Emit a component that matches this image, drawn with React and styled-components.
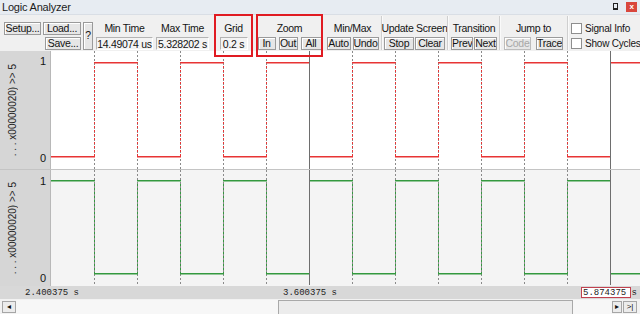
import React from 'react';
import styled, { createGlobalStyle } from 'styled-components';

const GlobalStyle = createGlobalStyle`
  html, body {
    margin: 0;
    padding: 0;
    background: #f0f0f0;
  }
  body {
    font-family: "Liberation Sans", Arial, sans-serif;
  }
`;

const Window = styled.div`
  position: relative;
  width: 640px;
  height: 314px;
  display: flex;
  flex-direction: column;
  background: #f0f0f0;
  overflow: hidden;
  font-size: 11px;
  color: #141414;
`;

const TitleBar = styled.div`
  height: 14px;
  display: flex;
  align-items: center;
  padding: 0 3px 0 2px;
  background: #e7ecf2;
  font-size: 11px;
  color: #1c1c1c;
  letter-spacing: -0.2px;
`;

const TitleText = styled.span`
  flex: 1;
`;

const Pin = styled.span`
  width: 5px;
  height: 7px;
  margin-right: 8px;
  border: 1px solid #222;
  border-bottom-width: 2px;
  box-sizing: border-box;
`;

const CloseBtn = styled.span`
  width: 11px;
  height: 10px;
  background: #d9473d;
  color: #fff;
  font-size: 8px;
  line-height: 10px;
  text-align: center;
  font-weight: bold;
`;

const Toolbar = styled.div`
  height: 38px;
  box-sizing: border-box;
  border-top: 1px solid #d9dee5;
  display: flex;
  align-items: flex-start;
  padding-top: 7px;
  font-size: 10.5px;
  letter-spacing: -0.3px;
`;

const FileGrid = styled.div`
  display: grid;
  grid-template-columns: 37px 38px 10px;
  grid-template-rows: 13px 13px;
  column-gap: 2px;
  row-gap: 2px;
  margin-left: 4px;
  flex: none;
`;

const Group = styled.div`
  width: ${p => p.$w}px;
  margin-left: ${p => p.$ml}px;
  flex: none;
  display: flex;
  flex-direction: column;
  align-items: center;
  gap: 2px;
`;

const Label = styled.div`
  height: 13px;
  line-height: 13px;
  white-space: nowrap;
`;

const Row = styled.div`
  display: flex;
  gap: ${p => p.$gap}px;
  height: 13px;
`;

const Btn = styled.button`
  width: ${p => p.$w}px;
  height: ${p => p.$h || 13}px;
  padding: 0;
  margin: 0;
  justify-self: end;
  grid-column: ${p => p.$col || 'auto'};
  grid-row: ${p => p.$row || 'auto'};
  font: inherit;
  line-height: 11px;
  letter-spacing: -0.3px;
  color: ${p => (p.disabled ? '#a8a8a8' : '#141414')};
  background: #e6e6e6;
  border: 1px solid ${p => (p.disabled ? '#bcbcbc' : '#9a9a9a')};
  box-shadow: inset 1px 1px 0 #fff;
  box-sizing: border-box;
  white-space: nowrap;
  overflow: hidden;
`;

const ValueBox = styled.div`
  width: ${p => p.$w}px;
  height: 13px;
  line-height: 12px;
  box-sizing: border-box;
  border: 1px solid #b4b4b4;
  border-right-color: #fff;
  border-bottom-color: #fff;
  background: #f3f3f3;
  text-align: center;
  white-space: nowrap;
`;

const Sep = styled.div`
  width: 1px;
  height: 34px;
  margin-top: -6px;
  margin-left: ${p => p.$ml}px;
  flex: none;
  background: #cfcfcf;
  box-shadow: 1px 0 0 #fafafa;
`;

const CheckCol = styled.div`
  margin-left: 3px;
  display: flex;
  flex-direction: column;
  gap: 2px;
`;

const Check = styled.div`
  display: flex;
  align-items: center;
  gap: 3px;
  height: 13px;
  font-size: 10px;
  letter-spacing: -0.2px;
  white-space: nowrap;
`;

const CheckBox = styled.span`
  width: 11px;
  height: 11px;
  box-sizing: border-box;
  border: 1px solid #8e8e8e;
  background: #fff;
`;

const Tracks = styled.div`
  display: flex;
  flex-direction: column;
`;

const Track = styled.div`
  display: flex;
  height: ${p => p.$h}px;
  background: ${p => p.$bg};
  border-top: ${p => (p.$sep ? '1px solid #c4c4c4' : 'none')};
`;

const SidePanel = styled.div`
  width: 51px;
  flex: none;
  display: flex;
  background: #d6d6d6;
  border-right: 1px solid #b8b8b8;
  box-sizing: border-box;
`;

const NameCol = styled.div`
  width: 24px;
  display: flex;
  align-items: center;
  justify-content: center;
`;

const SignalName = styled.span`
  writing-mode: vertical-rl;
  transform: rotate(180deg);
  font-size: 10px;
  white-space: nowrap;
  color: #222;
`;

const ValueCol = styled.div`
  flex: 1;
  display: flex;
  flex-direction: column;
  justify-content: space-between;
  align-items: flex-end;
  padding: ${p => p.$pt}px 4px ${p => p.$pb}px 0;
  font-size: 11px;
  line-height: 12px;
`;

const TimeAxis = styled.div`
  height: 13px;
  display: flex;
  align-items: center;
  background: #d8d8d8;
  font-family: "Liberation Mono", "Courier New", monospace;
  font-size: 9px;
  color: #222;
`;

const TimeMark = styled.span`
  margin-left: ${p => p.$ml}px;
  white-space: nowrap;
`;

const TimeEnd = styled.span`
  margin-left: auto;
  margin-right: 9px;
  width: 50px;
  height: 11px;
  line-height: 10px;
  box-sizing: border-box;
  border: 1px solid #c2414f;
  background: #fff;
  padding-left: 1px;
  white-space: nowrap;
`;

const ScrollBar = styled.div`
  height: 15px;
  display: flex;
  align-items: flex-end;
  background: #f2f2f2;
`;

const ArrowBtn = styled.div`
  width: ${p => p.$w}px;
  height: 12px;
  margin: 0 ${p => p.$mr || 0}px 1px ${p => p.$ml || 0}px;
  box-sizing: border-box;
  border: 1px solid #a6a6a6;
  background: #ececec;
  font-size: 8px;
  line-height: 10px;
  text-align: center;
  color: #111;
`;

const Trough = styled.div`
  flex: 1;
  height: 14px;
  display: flex;
  background: #f7f7f7;
`;

const Thumb = styled.div`
  margin-left: 262px;
  width: 295px;
  box-sizing: border-box;
  border: 1px solid #a9a9a9;
  border-bottom: none;
  background: #ececec;
`;

const Annotation = styled.div`
  position: absolute;
  top: 14px;
  left: ${p => p.$x}px;
  width: ${p => p.$w}px;
  height: 43px;
  box-sizing: border-box;
  border: 2px solid #e01b22;
  pointer-events: none;
`;

const PLOT_W = 589;
const HALF = 43;
const CURSORS = [258, 559];

function Wave({ height, hi, lo, color, startHigh }) {
  const edges = [];
  for (let x = HALF; x < PLOT_W; x += HALF) edges.push(x);
  const bounds = [0, ...edges, PLOT_W];
  let flat = '';
  for (let i = 0; i < bounds.length - 1; i++) {
    const high = (i % 2 === 0) === startHigh;
    const y = (high ? hi : lo) + 0.75;
    flat += `M${bounds[i]} ${y}H${bounds[i + 1] + 1}`;
  }
  const steps = edges.map(x => `M${x + 0.5} ${hi + 2}V${lo}`).join('');
  const grid = edges.map(x => `M${x + 0.5} 0V${height}`).join('');
  const cursors = CURSORS.map(x => `M${x + 0.5} 0V${height}`).join('');
  return (
    <svg width={PLOT_W} height={height} style={{ display: 'block' }}>
      <path d={grid} stroke="#8a8a8a" strokeDasharray="2 2" fill="none" />
      <path d={steps} stroke={color} strokeDasharray="2 2" strokeDashoffset="2" fill="none" />
      <path d={flat} stroke={color} strokeWidth="1.5" fill="none" />
      <path d={cursors} stroke="#6e6e6e" fill="none" />
    </svg>
  );
}

const signals = [
  { h: 118, bg: '#ffffff', color: '#e83434', hi: 11, lo: 105, startHigh: false, pt: 4, pb: 5 },
  { h: 116, bg: '#f4f4f4', color: '#34993f', hi: 10, lo: 103, startHigh: true, pt: 5, pb: 2, sep: true },
];

export default function App() {
  return (
    <Window>
      <GlobalStyle />
      <TitleBar>
        <TitleText>Logic Analyzer</TitleText>
        <Pin />
        <CloseBtn>x</CloseBtn>
      </TitleBar>

      <Toolbar>
        <FileGrid>
          <Btn $w={37} $col="1" $row="1">Setup...</Btn>
          <Btn $w={38} $col="2" $row="1">Load...</Btn>
          <Btn $w={36} $col="2" $row="2">Save...</Btn>
          <Btn $w={10} $h={28} $col="3" $row="1 / span 2">?</Btn>
        </FileGrid>

        <Group $w={57} $ml={3}>
          <Label>Min Time</Label>
          <ValueBox $w={57}>14.49074 us</ValueBox>
        </Group>
        <Group $w={53} $ml={3}>
          <Label>Max Time</Label>
          <ValueBox $w={53}>5.328202 s</ValueBox>
        </Group>
        <Group $w={39} $ml={5}>
          <Label>Grid</Label>
          <ValueBox $w={28}>0.2 s</ValueBox>
        </Group>
        <Group $w={67} $ml={3}>
          <Label>Zoom</Label>
          <Row $gap={3}>
            <Btn $w={18}>In</Btn>
            <Btn $w={19}>Out</Btn>
            <Btn $w={21}>All</Btn>
          </Row>
        </Group>
        <Group $w={53} $ml={3}>
          <Label>Min/Max</Label>
          <Row $gap={2}>
            <Btn $w={24}>Auto</Btn>
            <Btn $w={26}>Undo</Btn>
          </Row>
        </Group>
        <Sep $ml={2} />
        <Group $w={61} $ml={2}>
          <Label>Update Screen</Label>
          <Row $gap={1}>
            <Btn $w={30}>Stop</Btn>
            <Btn $w={30}>Clear</Btn>
          </Row>
        </Group>
        <Sep $ml={2} />
        <Group $w={46} $ml={3}>
          <Label>Transition</Label>
          <Row $gap={1}>
            <Btn $w={22}>Prev</Btn>
            <Btn $w={23}>Next</Btn>
          </Row>
        </Group>
        <Sep $ml={2} />
        <Group $w={61} $ml={3}>
          <Label>Jump to</Label>
          <Row $gap={5}>
            <Btn $w={27} disabled>Code</Btn>
            <Btn $w={27}>Trace</Btn>
          </Row>
        </Group>
        <Sep $ml={3} />
        <CheckCol>
          <Check><CheckBox />Signal Info</Check>
          <Check><CheckBox />Show Cycles</Check>
        </CheckCol>
      </Toolbar>

      <Tracks>
        {signals.map((s, i) => (
          <Track key={i} $h={s.h} $bg={s.bg} $sep={s.sep}>
            <SidePanel>
              <NameCol>
                <SignalName>. . . x00000020) &gt;&gt; 5</SignalName>
              </NameCol>
              <ValueCol $pt={s.pt} $pb={s.pb}>
                <span>1</span>
                <span>0</span>
              </ValueCol>
            </SidePanel>
            <Wave height={s.sep ? s.h - 1 : s.h} hi={s.hi} lo={s.lo}
              color={s.color} startHigh={s.startHigh} />
          </Track>
        ))}
      </Tracks>

      <TimeAxis>
        <TimeMark $ml={25}>2.400375 s</TimeMark>
        <TimeMark $ml={204}>3.600375 s</TimeMark>
        <TimeEnd>5.874375 s</TimeEnd>
      </TimeAxis>

      <ScrollBar>
        <ArrowBtn $w={14} $ml={2}>◂</ArrowBtn>
        <Trough>
          <Thumb />
        </Trough>
        <ArrowBtn $w={10}>▸</ArrowBtn>
        <ArrowBtn $w={14} $ml={1} $mr={3}>&gt;|</ArrowBtn>
      </ScrollBar>

      <Annotation $x={214} $w={39} />
      <Annotation $x={256} $w={67} />
    </Window>
  );
}
